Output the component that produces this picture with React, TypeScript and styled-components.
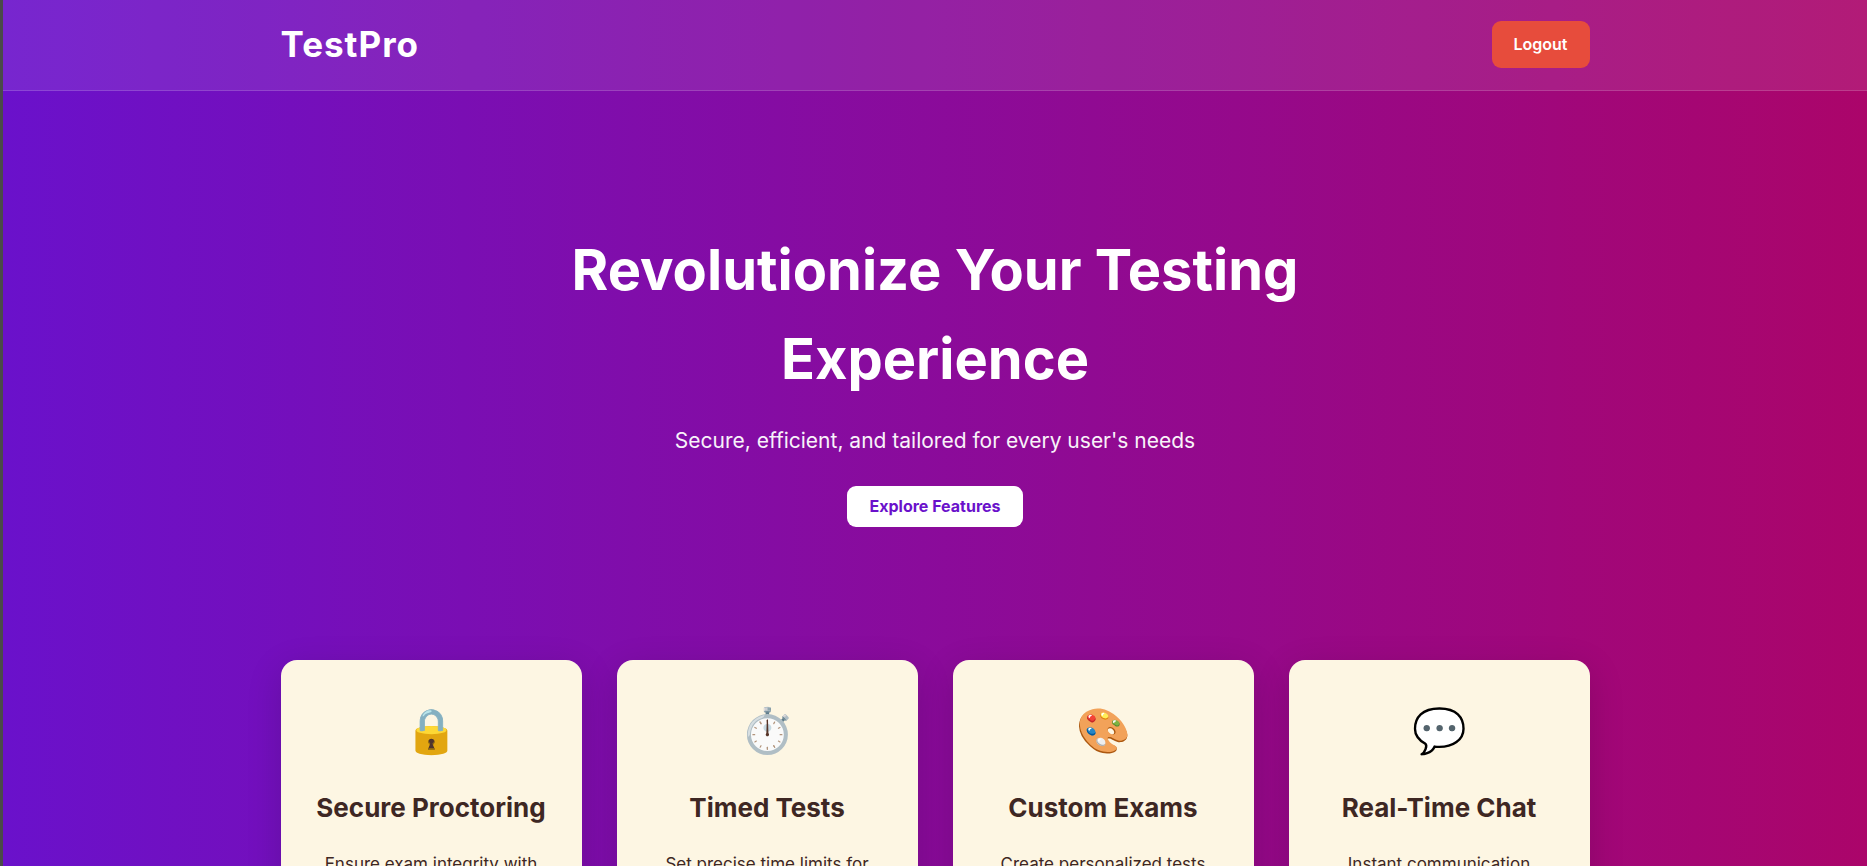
import React from "react";
import styled, { createGlobalStyle } from "styled-components";

const GlobalStyle = createGlobalStyle`
  *, *::before, *::after { box-sizing: border-box; }
  body {
    margin: 0;
    font-family: Inter, "Liberation Sans", sans-serif;
    font-size: 18px;
    line-height: 1.6;
    color: #fff;
    background: #6a11cb;
  }
  h1, h2, p { margin: 0; }
  a { text-decoration: none; }
`;

const Page = styled.div`
  min-height: 100vh;
  border-left: 3px solid #4a4a4a;
  background: linear-gradient(to right, #6a11cb, #ab056a);
`;

const Container = styled.div`
  width: 100%;
  max-width: 1379px;
  margin: 0 auto;
  padding: 0 35px;
`;

const Header = styled.header`
  padding: 16px 0 18px;
  background: rgba(255, 255, 255, 0.09);
  border-bottom: 1px solid rgba(255, 255, 255, 0.15);
`;

const Nav = styled(Container).attrs({ as: "nav" })`
  display: flex;
  align-items: center;
  justify-content: space-between;
`;

const Logo = styled.a`
  color: #fff;
  font-size: 35px;
  font-weight: 700;
  letter-spacing: 1px;
`;

const LogoutButton = styled.button`
  padding: 10px 22px;
  border: 0;
  border-radius: 9px;
  background: #e74c3c;
  color: #fff;
  font: 600 16px/27px Inter, "Liberation Sans", sans-serif;
  cursor: pointer;
`;

const Hero = styled.section`
  display: flex;
  flex-direction: column;
  align-items: center;
  max-width: 880px;
  margin: 0 auto;
  padding: 135px 35px 133px;
  text-align: center;
`;

const HeroTitle = styled.h1`
  margin-bottom: 20px;
  font-size: 56px;
  font-weight: 700;
  line-height: 89px;
`;

const HeroText = styled.p`
  margin-bottom: 28px;
  font-size: 21px;
  opacity: 0.95;
`;

const ExploreButton = styled.button`
  padding: 10px 22px;
  border: 0;
  border-radius: 9px;
  background: #fff;
  color: #6a11cb;
  font: 700 16px/21px Inter, "Liberation Sans", sans-serif;
  cursor: pointer;
`;

const FeatureGrid = styled(Container).attrs({ as: "section" })`
  display: grid;
  grid-template-columns: repeat(auto-fit, minmax(275px, 1fr));
  gap: 35px;
  padding-bottom: 88px;
`;

const Card = styled.article`
  padding: 35px;
  border-radius: 16px;
  background: #fdf6e3;
  color: #3e2723;
  text-align: center;
  box-shadow: 0 9px 35px rgba(0, 0, 0, 0.15);
`;

const CardIcon = styled.div`
  margin-bottom: 22px;
  font-size: 44px;
`;

const CardTitle = styled.h2`
  margin-bottom: 22px;
  font-size: 26px;
  font-weight: 700;
`;

const CardText = styled.p`
  font-size: 17px;
`;

const features = [
  { icon: "🔒", title: "Secure Proctoring", text: "Ensure exam integrity with advanced monitoring tools." },
  { icon: "⏱️", title: "Timed Tests", text: "Set precise time limits for every assessment." },
  { icon: "🎨", title: "Custom Exams", text: "Create personalized tests for any subject." },
  { icon: "💬", title: "Real-Time Chat", text: "Instant communication between students and teachers." },
];

export default function App() {
  return (
    <Page>
      <GlobalStyle />
      <Header>
        <Nav>
          <Logo href="#">TestPro</Logo>
          <LogoutButton type="button">Logout</LogoutButton>
        </Nav>
      </Header>
      <main>
        <Hero>
          <HeroTitle>Revolutionize Your Testing Experience</HeroTitle>
          <HeroText>Secure, efficient, and tailored for every user's needs</HeroText>
          <ExploreButton type="button">Explore Features</ExploreButton>
        </Hero>
        <FeatureGrid>
          {features.map(({ icon, title, text }) => (
            <Card key={title}>
              <CardIcon>{icon}</CardIcon>
              <CardTitle>{title}</CardTitle>
              <CardText>{text}</CardText>
            </Card>
          ))}
        </FeatureGrid>
      </main>
    </Page>
  );
}
